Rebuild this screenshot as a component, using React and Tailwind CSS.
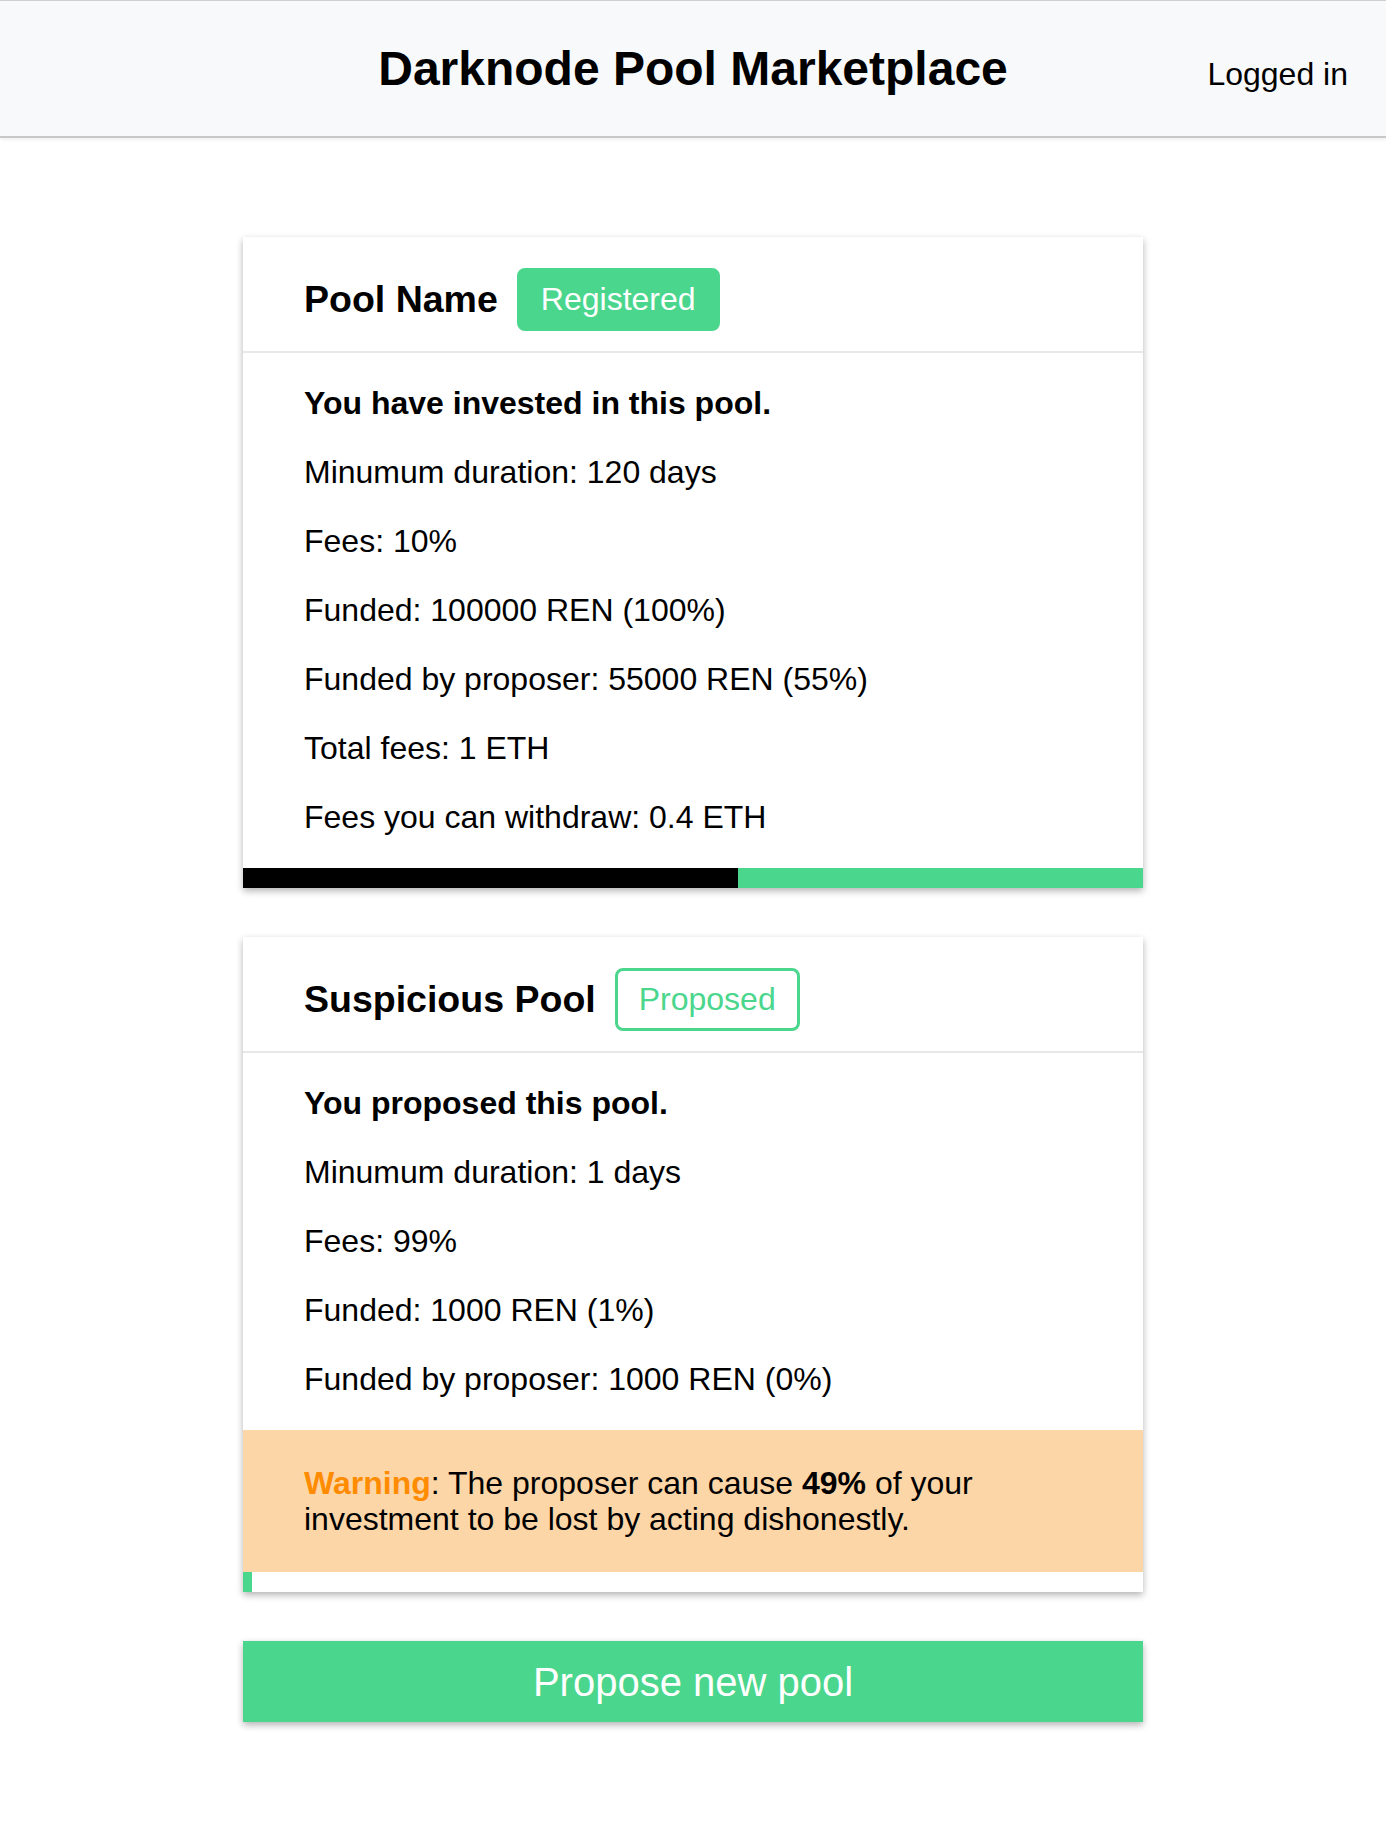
import React from "react";

const font = { fontFamily: '"Liberation Sans", Arial, sans-serif' };

function Badge({ filled, children }) {
  return (
    <span
      className={
        "ml-[19px] inline-flex items-center rounded-[8px] border-[3px] border-[#4ad68c] px-[21px] py-[10px] text-[32px] leading-[37px] " +
        (filled ? "bg-[#4ad68c] text-white" : "bg-white text-[#4ad68c]")
      }
    >
      {children}
    </span>
  );
}

function Card({ name, badge, filled, lead, lines, warning, black, green }) {
  return (
    <div className="w-[900px] bg-white shadow-[0_3px_7px_rgba(0,0,0,0.3)]">
      <div className="h-[116px] border-b-2 border-[#e8e8e8] px-[61px] pt-[31px]">
        <div className="flex items-center">
          <span className="text-[37.5px] font-bold leading-[43px] text-black">{name}</span>
          <Badge filled={filled}>{badge}</Badge>
        </div>
      </div>
      <div className="flex flex-col gap-8 px-[61px] py-8 text-[32px] leading-[37px] text-black">
        <p className="font-bold">{lead}</p>
        {lines.map((l) => (
          <p key={l}>{l}</p>
        ))}
      </div>
      {warning && (
        <div className="bg-[#fdd6a7] px-[61px] py-[35px] text-[32px] leading-[36px] text-black">
          <p>
            <b className="font-bold text-[#ff8c00]">Warning</b>: The proposer can cause{" "}
            <b className="font-bold">49%</b> of your investment to be lost by acting
            dishonestly.
          </p>
        </div>
      )}
      <div className="flex h-5 w-full bg-white">
        <div className="h-full bg-black" style={{ width: `${black}%` }} />
        <div className="h-full bg-[#4ad68c]" style={{ width: `${green}%` }} />
      </div>
    </div>
  );
}

export default function App() {
  return (
    <div style={font} className="min-h-[1836px] bg-white text-black">
      <header className="grid h-[138px] grid-cols-[1fr_auto_1fr] items-center border-t border-b-2 border-t-[#d0d0d0] border-b-[#c8c8c8] bg-[#f8f9fa] shadow-[0_2px_3px_rgba(0,0,0,0.06)]">
        <div />
        <h1 className="text-[48px] font-bold leading-[56px]">Darknode Pool Marketplace</h1>
        <div className="flex justify-end pr-[38px] pt-[12px]">
          <span className="text-[32px] leading-[37px]">Logged in</span>
        </div>
      </header>
      <main className="flex flex-col items-center gap-[49px] pt-[99px]">
        <Card
          name="Pool Name"
          badge="Registered"
          filled
          lead="You have invested in this pool."
          lines={[
            "Minumum duration: 120 days",
            "Fees: 10%",
            "Funded: 100000 REN (100%)",
            "Funded by proposer: 55000 REN (55%)",
            "Total fees: 1 ETH",
            "Fees you can withdraw: 0.4 ETH",
          ]}
          black={55}
          green={45}
        />
        <Card
          name="Suspicious Pool"
          badge="Proposed"
          lead="You proposed this pool."
          lines={[
            "Minumum duration: 1 days",
            "Fees: 99%",
            "Funded: 1000 REN (1%)",
            "Funded by proposer: 1000 REN (0%)",
          ]}
          warning
          black={0}
          green={1}
        />
        <button className="flex h-[81px] w-[900px] items-center justify-center bg-[#4ad68c] text-[40px] leading-[46px] text-white shadow-[0_3px_7px_rgba(0,0,0,0.3)]">
          Propose new pool
        </button>
      </main>
    </div>
  );
}
